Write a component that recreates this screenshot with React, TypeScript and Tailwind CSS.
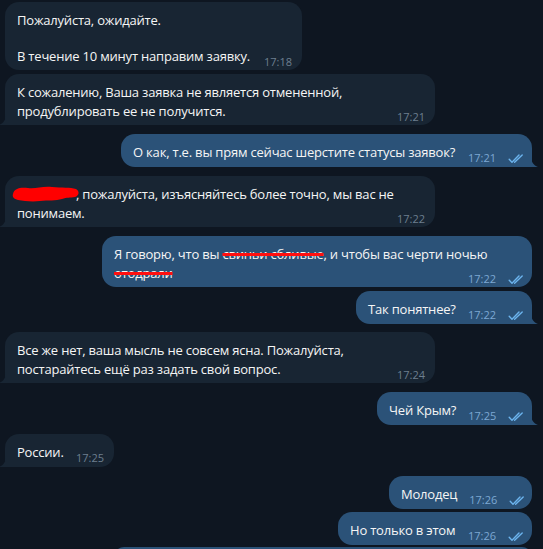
import React from "react";

const Ticks = () => (
  <svg width="17" height="11" viewBox="0 0 17 11" fill="none" className="shrink-0">
    <path d="M1.2 6.2 L4 9.2 L11 2" stroke="#6cb4ee" strokeWidth="1.4" strokeLinecap="round" strokeLinejoin="round" />
    <path d="M6.6 9.2 L14.2 2" stroke="#6cb4ee" strokeWidth="1.4" strokeLinecap="round" />
  </svg>
);

const TailOut = () => (
  <svg width="7" height="11" viewBox="0 0 7 11" className="absolute right-[-6px] bottom-0">
    <path d="M0 0 C0 5 2 9 7 11 L0 11 Z" fill="#2b5278" />
  </svg>
);

const TailIn = () => (
  <svg width="7" height="11" viewBox="0 0 7 11" className="absolute left-[-6px] bottom-0">
    <path d="M7 0 C7 5 5 9 0 11 L7 11 Z" fill="#182533" />
  </svg>
);

type BubbleProps = {
  lines: React.ReactNode[];
  time: string;
  tail?: boolean;
  w: string;
};

function In({ lines, time, tail, w }: BubbleProps) {
  const head = lines.slice(0, -1);
  const last = lines[lines.length - 1];
  return (
    <div className="flex justify-start pl-[5px]">
      <div
        className={`relative flex flex-col bg-[#182533] pl-[12px] pr-[10px] pt-[9px] pb-[4px] min-h-[33px] text-[13px] leading-[19px] tracking-[-0.2px] text-[#f5f5f5] ${
          tail ? "rounded-[14px] rounded-bl-none" : "rounded-[14px]"
        } ${w}`}
      >
        {head.map((l, i) => (
          <div key={i} className="whitespace-nowrap">
            {l}
          </div>
        ))}
        <div className="flex items-end justify-between">
          <div className="whitespace-nowrap">{last}</div>
          <div className="ml-[12px] mb-[-4px] text-[11px] leading-[16px] tracking-normal text-[#6d7f8f]">{time}</div>
        </div>
        {tail && <TailIn />}
      </div>
    </div>
  );
}

function Out({ lines, time, tail, w }: BubbleProps) {
  const head = lines.slice(0, -1);
  const last = lines[lines.length - 1];
  return (
    <div className="flex justify-end pr-[11px]">
      <div
        className={`relative flex flex-col bg-[#2b5278] pl-[12px] pr-[7px] pt-[9px] pb-[4px] min-h-[33px] text-[13px] leading-[19px] tracking-[-0.2px] text-[#f5f5f5] ${
          tail ? "rounded-[14px] rounded-br-none" : "rounded-[14px]"
        } ${w}`}
      >
        {head.map((l, i) => (
          <div key={i} className="whitespace-nowrap">
            {l}
          </div>
        ))}
        <div className="flex items-end justify-between">
          <div className="whitespace-nowrap">{last}</div>
          <div className="ml-[12px] mb-[-4px] flex items-center gap-[12px]">
            <span className="text-[11px] leading-[16px] tracking-normal text-[#7da8d3]">{time}</span>
            <Ticks />
          </div>
        </div>
        {tail && <TailOut />}
      </div>
    </div>
  );
}

const RedBlob = () => (
  <span className="relative inline-block w-[59px] h-[12px] align-middle">
    <svg width="68" height="18" viewBox="0 0 68 18" className="absolute left-[-5px] top-[-5px]">
      <path
        d="M1 9 C2 3 9 2 16 3 C24 4 30 1 40 2 C50 3 58 2 64 4 C68 6 67 11 63 12 C58 13 55 12 50 14 C44 16 36 15 28 16 C20 17 12 16 6 15 C2 14 0 12 1 9 Z"
        fill="#ff0000"
      />
    </svg>
  </span>
);

const Strike = ({ children }: { children: React.ReactNode }) => (
  <span className="line-through decoration-[#ff1010] decoration-[2.5px]">{children}</span>
);

export default function App() {
  return (
    <div className="w-[543px] h-[549px] overflow-hidden bg-[#0e1621] font-['Open_Sans',sans-serif] pt-[2px] flex flex-col">
      <div className="flex flex-col gap-[4px]">
        <In
          time="17:18"
          w="w-[297px]"
          lines={["Пожалуйста, ожидайте.", <span className="block h-[17px]" />, "В течение 10 минут направим заявку."]}
        />
        <In
          time="17:21"
          tail
          w="w-[430px]"
          lines={["К сожалению, Ваша заявка не является отмененной,", "продублировать ее не получится."]}
        />
      </div>

      <div className="mt-[9px]">
        <Out time="17:21" tail w="w-[411px]" lines={["О как, т.е. вы прям сейчас шерстите статусы заявок?"]} />
      </div>

      <div className="mt-[9px]">
        <In
          time="17:22"
          tail
          w="w-[430px]"
          lines={[
            <>
              <RedBlob />, пожалуйста, изъясняйтесь более точно, мы вас не
            </>,
            "понимаем.",
          ]}
        />
      </div>

      <div className="mt-[9px] flex flex-col gap-[4px]">
        <Out
          time="17:22"
          w="w-[430px]"
          lines={[
            <>
              Я говорю, что вы <Strike>свиньи сбливые</Strike>, и чтобы вас черти ночью
            </>,
            <Strike>отодрали</Strike>,
          ]}
        />
        <Out time="17:22" tail w="w-[176px]" lines={["Так понятнее?"]} />
      </div>

      <div className="mt-[8px]">
        <In
          time="17:24"
          tail
          w="w-[430px]"
          lines={["Все же нет, ваша мысль не совсем ясна. Пожалуйста,", "постарайтесь ещё раз задать свой вопрос."]}
        />
      </div>

      <div className="mt-[9px]">
        <Out time="17:25" tail w="w-[155px]" lines={["Чей Крым?"]} />
      </div>

      <div className="mt-[9px]">
        <In time="17:25" tail w="w-[109px]" lines={["России."]} />
      </div>

      <div className="mt-[9px] flex flex-col gap-[3px]">
        <Out time="17:26" w="w-[143px]" lines={["Молодец"]} />
        <Out time="17:26" w="w-[194px]" lines={["Но только в этом"]} />
      </div>

      <div className="mt-[2px] flex justify-end pr-[11px]">
        <div className="w-[418px] h-[10px] rounded-t-[14px] bg-[#2b5278]" />
      </div>
    </div>
  );
}
